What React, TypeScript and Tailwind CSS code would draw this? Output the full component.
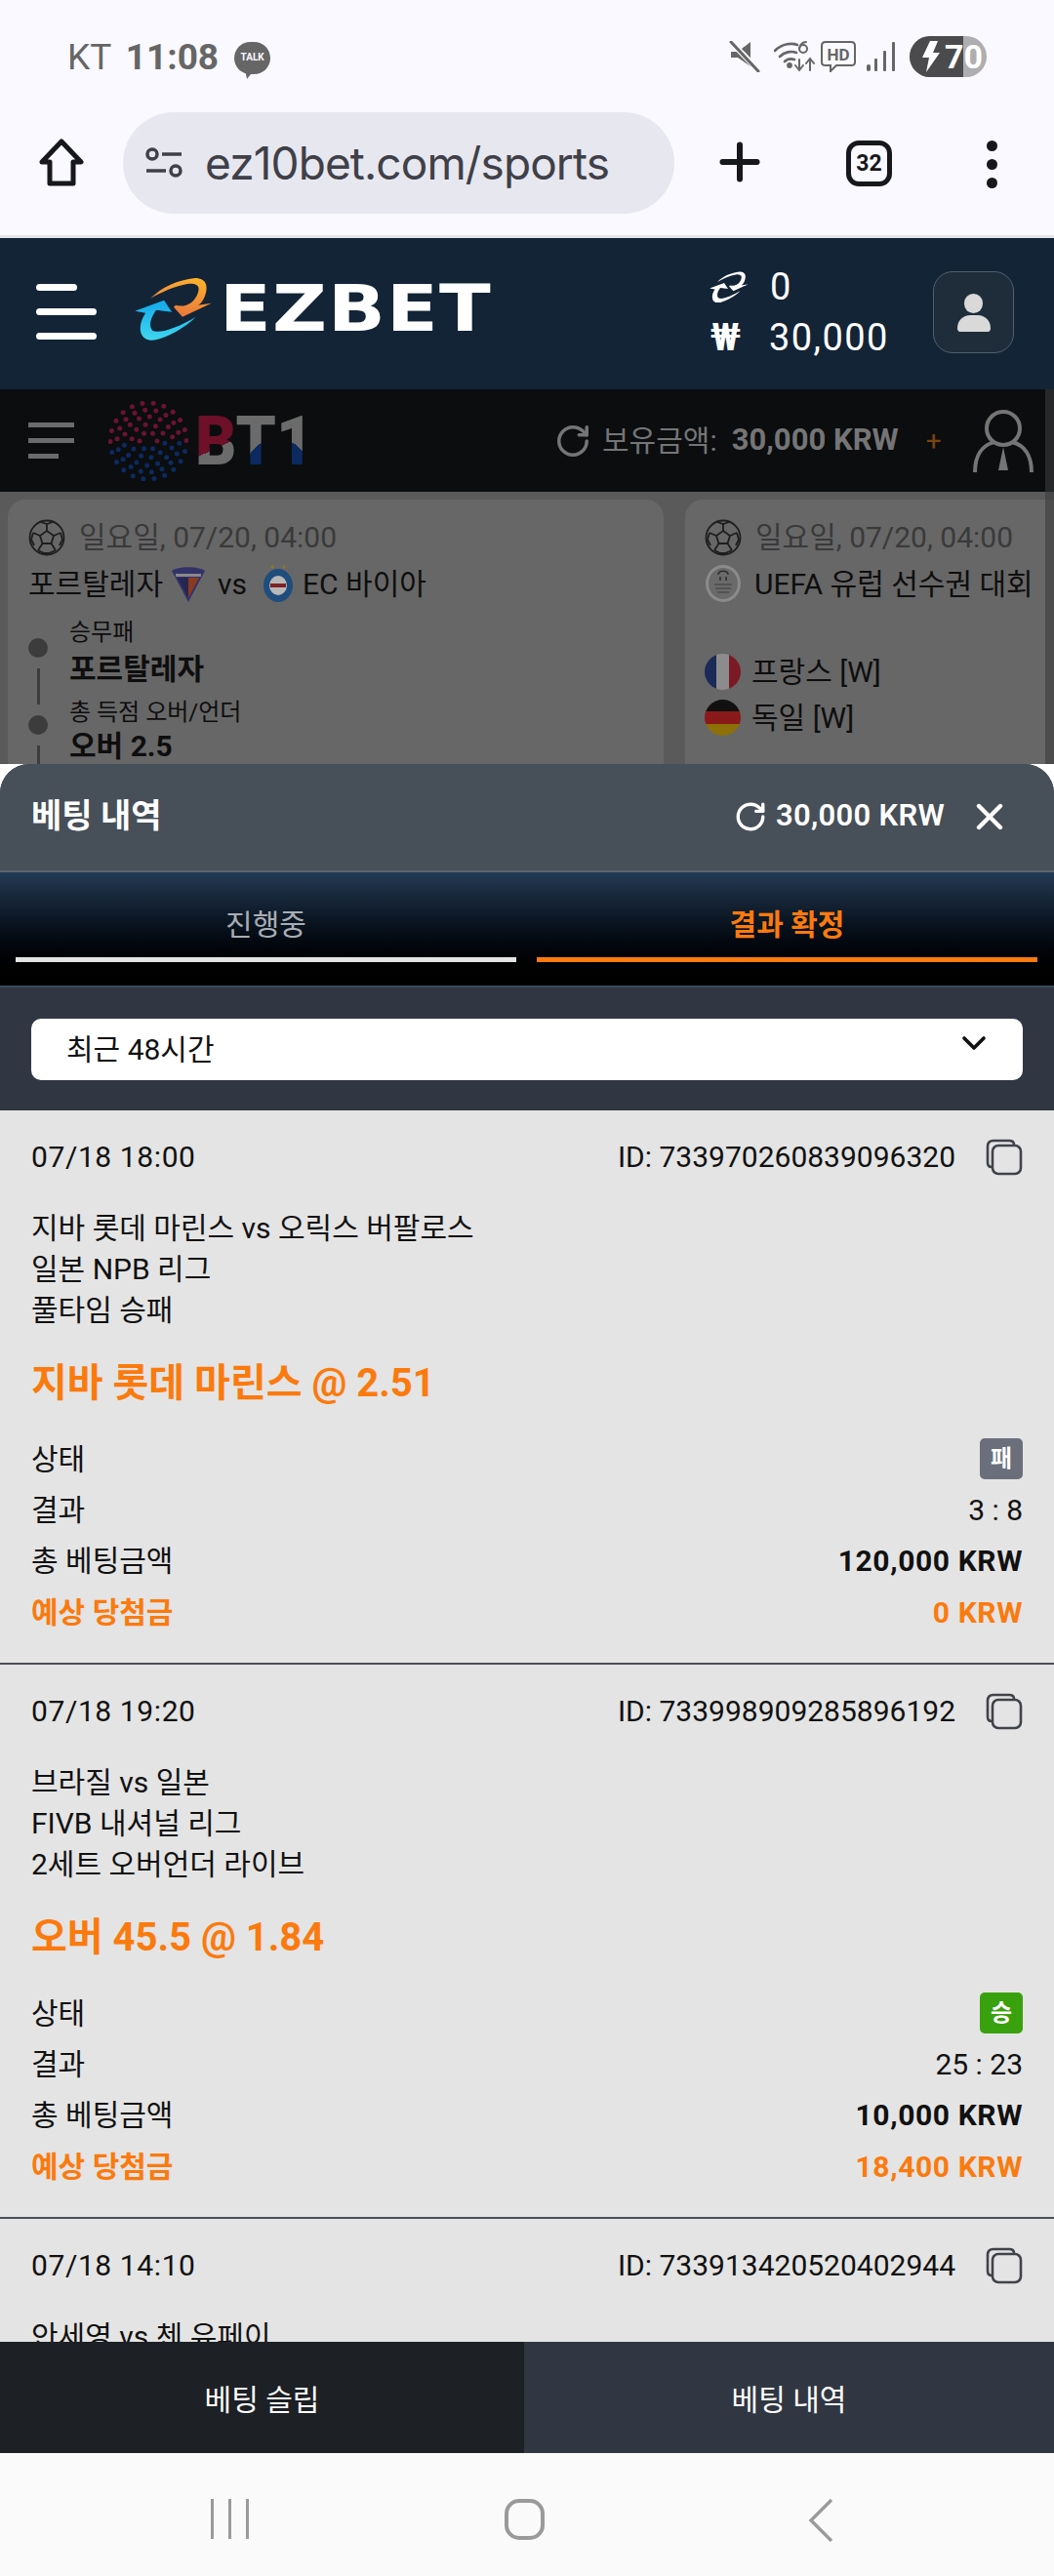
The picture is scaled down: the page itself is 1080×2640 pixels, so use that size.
import { RotateCw, X, ChevronDown, Plus } from "lucide-react";

const sans = "font-['Roboto','Noto_Sans_CJK_KR',sans-serif]";

function HomeIcon() {
  return (
    <svg width="48" height="50" viewBox="0 0 48 50" fill="none" stroke="#17181c" strokeWidth="5" strokeLinejoin="round">
      <path d="M24 3 L44 24 H36 V46 H12 V24 H4 Z" />
    </svg>
  );
}

function TuneIcon() {
  return (
    <svg width="40" height="34" viewBox="0 0 40 34" fill="none" stroke="#3f4048" strokeWidth="3.5">
      <circle cx="8" cy="8" r="5" />
      <path d="M18 8 H38" />
      <path d="M2 25 H22" />
      <circle cx="32" cy="25" r="5" />
    </svg>
  );
}

function MuteIcon() {
  return (
    <svg width="32" height="32" viewBox="0 0 32 32" fill="#666">
      <path d="M2 11 H9 L22 1 V26 L9 17 H2 Z" />
      <path d="M3 2 L30 30" stroke="#f9f9ff" strokeWidth="6" />
      <path d="M2 1 L30 31" stroke="#666" strokeWidth="3" strokeLinecap="round" />
    </svg>
  );
}

function WifiIcon() {
  return (
    <svg width="42" height="32" viewBox="0 0 42 32" fill="none" stroke="#666" strokeWidth="2.6" strokeLinecap="round">
      <path d="M1 10 C9 2 19 2 24 4" />
      <path d="M6 16 C11 11 18 10 23 12" />
      <path d="M11 21 C14 18 18 18 21 19" />
      <circle cx="16" cy="25" r="1.6" fill="#666" />
      <circle cx="30" cy="8" r="4" strokeWidth="2" />
      <path d="M33 1 C30 1 27 3 26 8" strokeWidth="2" />
      <path d="M26 19 V29 M22 25 L26 30 L30 25 M37 30 V19 M33 23 L37 18 L41 23" strokeWidth="2" />
    </svg>
  );
}

function HdIcon() {
  return (
    <svg width="36" height="32" viewBox="0 0 36 32" fill="none" stroke="#666" strokeWidth="2">
      <path d="M5 1 H31 Q35 1 35 5 V22 Q35 25 31 25 H16 L10 31 V25 H5 Q1 25 1 22 V5 Q1 1 5 1 Z" />
      <text x="18" y="20" textAnchor="middle" fontFamily="Roboto" fontWeight="700" fontSize="17" fill="#666" stroke="none">HD</text>
    </svg>
  );
}

function SignalIcon() {
  return (
    <svg width="29" height="30" viewBox="0 0 29 30" fill="#666">
      <rect x="0" y="23" width="4" height="7" rx="2" />
      <rect x="8" y="17" width="3" height="13" rx="1" />
      <rect x="17" y="9" width="3" height="21" rx="1" />
      <rect x="26" y="0" width="3" height="30" rx="1" />
    </svg>
  );
}

function TalkBubble() {
  return (
    <div className="relative w-[37px] h-[33px] rounded-full bg-[#666] flex items-center justify-center mt-[2px]">
      <span className="text-[10px] leading-none font-bold text-[#f9f9ff] font-['Roboto',sans-serif]">TALK</span>
      <svg className="absolute left-[11px] top-[28px]" width="10" height="10" viewBox="0 0 10 10" fill="#666">
        <path d="M0 0 H10 L2 10 Z" />
      </svg>
    </div>
  );
}

function SwirlLogo({ mono = false, size = 80 }: { mono?: boolean; size?: number }) {
  const warm = mono ? "#fff" : "url(#warmArrow)";
  const cool = mono ? "#fff" : "url(#coolArrow)";
  return (
    <svg width={size} height={size * 0.82} viewBox="0 0 80 66">
      <defs>
        <linearGradient id="warmArrow" x1="0.7" y1="0" x2="0.4" y2="1">
          <stop offset="0" stopColor="#fdb02e" />
          <stop offset="1" stopColor="#e8743b" />
        </linearGradient>
        <linearGradient id="coolArrow" x1="0.4" y1="0" x2="0.4" y2="1">
          <stop offset="0" stopColor="#12a9ea" />
          <stop offset="1" stopColor="#40d6ef" />
        </linearGradient>
      </defs>
      <path
        fill={warm}
        d="M16 22 C28 10 44 3 62 1 C74 1 76 10 72 20 C70 25 67 28 65 29 L79 27 L49 41 L40 31 L42 29 C52 32 62 26 65 16 C68 8 62 6 54 7 C42 9 28 15 16 22 Z"
      />
      <path
        fill={cool}
        d="M0 35 L30 24 L38 36 L22 34 C16 42 14 50 18 55 C26 59 44 52 63 41 C52 52 34 62 20 65 C8 66 4 58 6 48 C7 44 9 40 11 37 Z"
      />
    </svg>
  );
}

function BallDots() {
  const rings = [
    { r: 9, n: 6 },
    { r: 17, n: 10 },
    { r: 25, n: 14 },
    { r: 32, n: 18 },
    { r: 39, n: 22 },
  ];
  const dots = rings.flatMap(({ r, n }, ri) =>
    Array.from({ length: n }, (_, i) => {
      const a = (i / n) * Math.PI * 2 + ri * 0.14;
      const x = 40 + r * Math.cos(a);
      const y = 40 + r * Math.sin(a);
      return <circle key={`${ri}-${i}`} cx={x} cy={y} r={2.5} fill={y < 42 ? "#6a1430" : "#0c2a5f"} />;
    })
  );
  return (
    <svg width="82" height="82" viewBox="-1 -1 82 82">
      {dots}
    </svg>
  );
}

function Bt1Wordmark() {
  return (
    <svg width="122" height="70" viewBox="0 0 122 70">
      <defs>
        <linearGradient id="btLetterB" gradientUnits="userSpaceOnUse" x1="4" y1="22" x2="16" y2="48">
          <stop offset="0.62" stopColor="#6d1028" />
          <stop offset="0.62" stopColor="#6b6b6b" />
        </linearGradient>
        <radialGradient id="btLettersT" gradientUnits="userSpaceOnUse" cx="84" cy="56" r="33">
          <stop offset="0.98" stopColor="#0c2a5f" />
          <stop offset="0.98" stopColor="#6b6b6b" />
        </radialGradient>
      </defs>
      <text x="0" y="50" fontFamily="Roboto" fontWeight="900" fontSize="70" textLength="121" lengthAdjust="spacingAndGlyphs">
        <tspan fill="url(#btLetterB)">B</tspan>
        <tspan fill="url(#btLettersT)">T1</tspan>
      </text>
    </svg>
  );
}

function AgentIcon() {
  return (
    <svg width="62" height="64" viewBox="0 0 62 64" fill="none" stroke="#757575" strokeWidth="4">
      <ellipse cx="31" cy="19" rx="17" ry="17" />
      <path d="M2 64 C2 46 10 36 22 33 M60 64 C60 46 52 36 40 33" />
      <path d="M31 38 L36 62 H26 Z" fill="#757575" stroke="none" />
    </svg>
  );
}

function SoccerBall() {
  return (
    <svg width="38" height="38" viewBox="0 0 38 38" fill="none" stroke="#1e1e1e" strokeWidth="1.8">
      <circle cx="19" cy="19" r="17.5" />
      <path d="M19 12 L26 17 L23.5 25 H14.5 L12 17 Z" />
      <path d="M19 12 V5 M26 17 L33 14 M23.5 25 L28 32 M14.5 25 L10 32 M12 17 L5 14" />
      <path d="M13 3 L19 5 L25 3 M33 14 L35 21 L32 27 M28 32 L21 35 L16 35 L10 32 M6 27 L3 21 L5 14" />
    </svg>
  );
}

function CopyIcon() {
  return (
    <svg width="38" height="38" viewBox="0 0 38 38" fill="none" stroke="#404349" strokeWidth="2.6">
      <path d="M6 29 C3 29 2 27 2 24 V8 C2 4 4 2 8 2 H24 C27 2 29 3 29 6" />
      <rect x="7" y="7" width="29" height="29" rx="6" />
    </svg>
  );
}

function CrestA() {
  return (
    <svg width="36" height="38" viewBox="0 0 36 38">
      <path d="M1 6 C8 1 28 1 35 6 L18 38 Z" fill="#33336a" />
      <path d="M7 13 H18 V34 Z" fill="#26264f" />
      <path d="M18 13 H29 L18 34 Z" fill="#8b3a22" />
      <rect x="5" y="9" width="26" height="3" fill="#888" />
    </svg>
  );
}

function CrestB() {
  return (
    <svg width="32" height="38" viewBox="0 0 32 38">
      <ellipse cx="16" cy="21" rx="15" ry="17" fill="#1e4d7e" />
      <ellipse cx="16" cy="21" rx="9" ry="10" fill="#b8b8b8" />
      <rect x="8" y="19" width="16" height="4" fill="#7d2226" />
      <circle cx="10" cy="2" r="1.5" fill="#8a7a2a" />
      <circle cx="22" cy="2" r="1.5" fill="#8a7a2a" />
    </svg>
  );
}

function UefaMark() {
  return (
    <svg width="38" height="38" viewBox="0 0 38 38">
      <ellipse cx="19" cy="19" rx="18" ry="19" fill="#8b8b8b" />
      <ellipse cx="19" cy="19" rx="15" ry="16" fill="#6a6a6a" />
      <path d="M14 10 C14 5 24 5 24 10 M16 12 V16 M22 12 V16" stroke="#2d2d2d" strokeWidth="1.5" fill="none" />
      <path d="M10 20 H28 M11 24 H27 M13 28 H25" stroke="#3d3d3d" strokeWidth="1.2" />
    </svg>
  );
}

function FlagFr() {
  return (
    <div className="w-[37px] h-[37px] rounded-full overflow-hidden flex">
      <div className="flex-1 bg-[#1c2a57]" />
      <div className="flex-1 bg-[#8c8c8c]" />
      <div className="flex-1 bg-[#7b1a25]" />
    </div>
  );
}

function FlagDe() {
  return (
    <div className="w-[37px] h-[37px] rounded-full overflow-hidden flex flex-col">
      <div className="flex-1 bg-[#111]" />
      <div className="flex-1 bg-[#8a1a1a]" />
      <div className="flex-1 bg-[#8d7008]" />
    </div>
  );
}

function CardHead() {
  return (
    <div className="flex items-center gap-[14px] h-[38px]">
      <SoccerBall />
      <span className="text-[30px] text-[#3a3a3a] leading-none">일요일, 07/20, 04:00</span>
    </div>
  );
}

function Bet(props: {
  date: string;
  id: string;
  match: string;
  league?: string;
  market?: string;
  pick?: string;
  badge?: string;
  badgeBg?: string;
  score?: string;
  stake?: string;
  payout?: string;
}) {
  return (
    <div className="h-[568px] shrink-0 border-b-2 border-[#4a4e5a] px-[32px] text-[#111]">
      <div className="h-[95px] flex items-center justify-between text-[30px]">
        <span className="tracking-[0.6px]">{props.date}</span>
        <div className="flex items-center gap-[31px]">
          <span>ID: {props.id}</span>
          <CopyIcon />
        </div>
      </div>
      <div className="mt-[5px] text-[30px] leading-[42px]">
        <div>{props.match}</div>
        {props.league && <div>{props.league}</div>}
        {props.market && <div>{props.market}</div>}
      </div>
      {props.pick && (
        <>
          <div className="mt-[24px] h-[60px] flex items-center text-[40px] font-bold text-[#fb7a0e]">{props.pick}</div>
          <div className="mt-[21px] text-[30px]">
            <div className="h-[52px] flex items-center justify-between">
              <span>상태</span>
              <span className={`w-[44px] h-[42px] rounded-[5px] flex items-center justify-center text-[24px] font-bold text-white ${props.badgeBg}`}>
                {props.badge}
              </span>
            </div>
            <div className="h-[52px] flex items-center justify-between">
              <span>결과</span>
              <span>{props.score}</span>
            </div>
            <div className="h-[53px] flex items-center justify-between">
              <span>총 베팅금액</span>
              <span className="font-bold tracking-[0.6px]">{props.stake}</span>
            </div>
            <div className="h-[52px] flex items-center justify-between font-bold text-[#fb7a0e]">
              <span>예상 당첨금</span>
              <span className="tracking-[0.6px]">{props.payout}</span>
            </div>
          </div>
        </>
      )}
    </div>
  );
}

export default function App() {
  return (
    <div className={`relative w-[1080px] h-[2640px] overflow-hidden bg-white ${sans}`}>
      {/* Phone status bar */}
      <div className="h-[115px] bg-[#f9f9ff] pl-[69px] pr-[69px] pt-[37px] flex items-start justify-between text-[#666]">
        <div className="flex items-center gap-[16px] h-[42px]">
          <span className="text-[37px] leading-none">
            KT <span className="font-bold ml-[6px]">11:08</span>
          </span>
          <TalkBubble />
        </div>
        <div className="flex items-center h-[42px]">
          <MuteIcon />
          <div className="ml-[14px]">
            <WifiIcon />
          </div>
          <div className="ml-[6px]">
            <HdIcon />
          </div>
          <div className="ml-[11px]">
            <SignalIcon />
          </div>
          <div className="ml-[15px] relative w-[79px] h-[42px] rounded-full overflow-hidden bg-[#aeaeb0] flex items-center">
            <div className="absolute left-0 top-0 bottom-0 w-[55px] bg-[#4b4b4d]" />
            <svg className="relative ml-[11px]" width="20" height="32" viewBox="0 0 20 32" fill="#fff">
              <path d="M10 0 H18 L13 12 H20 L6 32 L9 17 H2 Z" />
            </svg>
            <span className="relative ml-[5px] text-[34px] leading-none font-bold text-white">70</span>
          </div>
        </div>
      </div>

      {/* Browser toolbar */}
      <div className="h-[129px] bg-[#f9f9ff] border-b-[3px] border-[#e4e4ea] flex items-start relative">
        <div className="ml-[39px] mt-[27px]">
          <HomeIcon />
        </div>
        <div className="ml-[39px] w-[565px] h-[104px] rounded-full bg-[#e7e7ef] flex items-center pl-[22px] gap-[22px]">
          <TuneIcon />
          <span className="text-[46px] leading-none text-[#3f4048] font-['Inter',sans-serif] tracking-[-0.9px]">ez10bet.com/sports</span>
        </div>
        <Plus className="ml-[37px] mt-[21px]" size={60} strokeWidth={2.4} color="#17181c" />
        <div className="ml-[79px] mt-[29px] w-[47px] h-[47px] rounded-[13px] border-[5px] border-[#17181c] flex items-center justify-center">
          <span className="text-[23px] font-bold text-[#17181c] leading-none">32</span>
        </div>
        <div className="ml-[97px] mt-[29px] flex flex-col gap-[8px]">
          <div className="w-[11px] h-[11px] rounded-full bg-[#17181c]" />
          <div className="w-[11px] h-[11px] rounded-full bg-[#17181c]" />
          <div className="w-[11px] h-[11px] rounded-full bg-[#17181c]" />
        </div>
      </div>

      {/* Site header */}
      <div className="h-[155px] bg-[#132437] flex items-center relative">
        <div className="ml-[37px] w-[62px] flex flex-col gap-[18px] items-start -mt-[4px]">
          <div className="w-[42px] h-[7px] rounded-full bg-white" />
          <div className="w-[62px] h-[7px] rounded-full bg-white" />
          <div className="w-[62px] h-[7px] rounded-full bg-white" />
        </div>
        <div className="ml-[39px] -mt-[9px]">
          <SwirlLogo />
        </div>
        <span className="ml-[7px] -mt-[9px] inline-block origin-left scale-x-[1.17] font-['DejaVu_Sans',sans-serif] font-bold text-[66px] leading-none text-white tracking-[1px]">EZBET</span>
        <div className="absolute left-[728px] top-[27px] text-white text-[38px] leading-none">
          <div className="flex items-center h-[46px]">
            <div className="w-[62px] -ml-[1px]">
              <SwirlLogo mono size={40} />
            </div>
            <span className="tracking-[1px]">0</span>
          </div>
          <div className="flex items-center h-[46px] mt-[6px]">
            <span className="w-[60px] font-bold text-[38px]">₩</span>
            <span className="tracking-[1.4px]">30,000</span>
          </div>
        </div>
        <div className="absolute left-[956px] top-[34px] w-[83px] h-[84px] rounded-[20px] bg-[#1f2d3b] border border-[#51606c] flex flex-col items-center justify-center">
          <div className="w-[19px] h-[20px] rounded-full bg-[#d9d9d9]" />
          <div className="w-[34px] h-[17px] rounded-t-[17px] rounded-b-[5px] bg-[#d9d9d9] mt-[2px]" />
        </div>
      </div>

      {/* Dimmed sportsbook behind the sheet */}
      <div className="h-[105px] bg-[#0b0d0f] flex items-center relative">
        <div className="ml-[29px] flex flex-col gap-[11px] items-start">
          <div className="w-[47px] h-[5px] bg-[#6b6b6b]" />
          <div className="w-[47px] h-[5px] bg-[#6b6b6b]" />
          <div className="w-[31px] h-[5px] bg-[#6b6b6b]" />
        </div>
        <div className="ml-[35px]">
          <BallDots />
        </div>
        <div className="ml-[7px] mt-[18px]">
          <Bt1Wordmark />
        </div>
        <RotateCw className="ml-[246px]" size={38} strokeWidth={2.2} color="#757575" />
        <span className="ml-[11px] text-[30px] text-[#757575]">보유금액:</span>
        <span className="ml-[15px] text-[31px] font-bold text-[#757575]">30,000 KRW</span>
        <span className="ml-[28px] text-[28px] text-[#7a4410]">+</span>
        <div className="ml-[32px]">
          <AgentIcon />
        </div>
      </div>
      <div className="h-[279px] bg-[#5a5a5a] overflow-hidden flex gap-[22px] pl-[8px] pt-[8px] text-[#0e0e0e]">
        <div className="w-[672px] h-[300px] shrink-0 rounded-t-[18px] bg-[#676767] pl-[21px] pt-[20px]">
          <CardHead />
          <div className="mt-[9px] flex items-center h-[38px] text-[30px]">
            <span>포르탈레자</span>
            <span className="ml-[8px]">
              <CrestA />
            </span>
            <span className="ml-[12px]">vs</span>
            <span className="ml-[16px]">
              <CrestB />
            </span>
            <span className="ml-[9px]">EC 바이아</span>
          </div>
          <div className="mt-[19px] flex">
            <div className="w-[20px] flex flex-col items-center pt-[18px]">
              <div className="w-[20px] h-[20px] rounded-full bg-[#3c3c3c]" />
              <div className="w-[3px] h-[37px] bg-[#3c3c3c] mt-[11px]" />
              <div className="w-[20px] h-[20px] rounded-full bg-[#3c3c3c] mt-[11px]" />
              <div className="w-[3px] h-[37px] bg-[#3c3c3c] mt-[11px]" />
            </div>
            <div className="ml-[22px] leading-none">
              <div className="text-[24px] h-[32px]">승무패</div>
              <div className="text-[30px] font-bold h-[47px] mt-[3px]">포르탈레자</div>
              <div className="text-[24px] h-[32px]">총 득점 오버/언더</div>
              <div className="text-[30px] font-bold">오버 2.5</div>
            </div>
          </div>
        </div>
        <div className="w-[672px] h-[300px] shrink-0 rounded-t-[18px] bg-[#676767] pl-[20px] pt-[20px]">
          <CardHead />
          <div className="mt-[9px] flex items-center h-[38px] text-[30px] gap-[13px]">
            <UefaMark />
            <span className="whitespace-nowrap">UEFA 유럽 선수권 대회</span>
          </div>
          <div className="mt-[53px] flex flex-col gap-[10px] text-[30px]">
            <div className="flex items-center h-[37px] gap-[11px]">
              <FlagFr />
              <span>프랑스 [W]</span>
            </div>
            <div className="flex items-center h-[37px] gap-[11px]">
              <FlagDe />
              <span>독일 [W]</span>
            </div>
          </div>
        </div>
      </div>

      {/* Page scrollbar above the dimmed content */}
      <div className="absolute left-[1071px] top-[399px] w-[9px] h-[384px] bg-[#3b3b3b]/60" />

      {/* Bet history sheet */}
      <div className="absolute left-0 top-[783px] w-[1080px] h-[1731px] rounded-t-[30px] overflow-hidden flex flex-col bg-[#313742]">
        <div className="h-[111px] shrink-0 bg-[#474f59] border-b-2 border-[#5c6670] flex items-center pl-[32px] pr-[44px] pb-[2px] text-white">
          <span className="text-[34px] font-bold">베팅 내역</span>
          <RotateCw className="ml-auto" size={34} strokeWidth={2.4} />
          <span className="ml-[9px] text-[31px] font-semibold tracking-[0.3px]">30,000 KRW</span>
          <X className="ml-[24px]" size={44} strokeWidth={2.4} />
        </div>
        <div className="h-[118px] shrink-0 bg-gradient-to-b from-[#243a54] to-black border-b-2 border-[#3a4a5c] grid grid-cols-[513px_513px] gap-[21px] px-[16px]">
          <div className="h-[92px] border-b-[5px] border-[#e4e4e4] flex justify-center pt-[34px]">
            <span className="text-[30px] leading-[40px] text-[#a8adb3]">진행중</span>
          </div>
          <div className="h-[92px] border-b-[5px] border-[#fb7a0e] flex justify-center pt-[34px]">
            <span className="text-[30px] leading-[40px] font-bold text-[#fb7a0e]">결과 확정</span>
          </div>
        </div>
        <div className="h-[126px] shrink-0 px-[32px] flex items-center">
          <div className="w-full h-[63px] rounded-[10px] bg-white flex items-center justify-between pl-[36px] pr-[30px] text-[#111]">
            <span className="text-[30px]">최근 48시간</span>
            <ChevronDown className="-mt-[12px]" size={40} strokeWidth={2.2} />
          </div>
        </div>
        <div className="flex-1 min-h-0 overflow-hidden bg-[#e4e4e4] flex flex-col">
          <Bet
            date="07/18 18:00"
            id="733970260839096320"
            match="지바 롯데 마린스 vs 오릭스 버팔로스"
            league="일본 NPB 리그"
            market="풀타임 승패"
            pick="지바 롯데 마린스 @ 2.51"
            badge="패"
            badgeBg="bg-[#6b6f7b]"
            score="3 : 8"
            stake="120,000 KRW"
            payout="0 KRW"
          />
          <Bet
            date="07/18 19:20"
            id="733998909285896192"
            match="브라질 vs 일본"
            league="FIVB 내셔널 리그"
            market="2세트 오버언더 라이브"
            pick="오버 45.5 @ 1.84"
            badge="승"
            badgeBg="bg-[#3aa10e]"
            score="25 : 23"
            stake="10,000 KRW"
            payout="18,400 KRW"
          />
          <Bet date="07/18 14:10" id="733913420520402944" match="안세영 vs 첸 유페이" />
        </div>
        <div className="h-[114px] shrink-0 grid grid-cols-[537px_1fr] text-white text-[30px]">
          <div className="bg-[#1d2025] flex items-center justify-center pt-[5px]">베팅 슬립</div>
          <div className="bg-[#313742] flex items-center justify-center pt-[5px]">베팅 내역</div>
        </div>
      </div>

      {/* Phone navigation bar */}
      <div className="absolute left-0 top-[2514px] w-[1080px] h-[126px] bg-[#fafafa] flex items-start pt-[47px] pl-[216px]">
        <div className="flex gap-[15px]">
          <div className="w-[3px] h-[41px] bg-[#9a9a9a]" />
          <div className="w-[3px] h-[41px] bg-[#9a9a9a]" />
          <div className="w-[3px] h-[41px] bg-[#9a9a9a]" />
        </div>
        <div className="ml-[262px] w-[41px] h-[42px] rounded-[15px] border-[4px] border-[#9a9a9a]" />
        <svg className="ml-[270px]" width="26" height="44" viewBox="0 0 26 44" fill="none" stroke="#9a9a9a" strokeWidth="3.4">
          <path d="M24 1 L3 22 L24 43" />
        </svg>
      </div>
    </div>
  );
}
